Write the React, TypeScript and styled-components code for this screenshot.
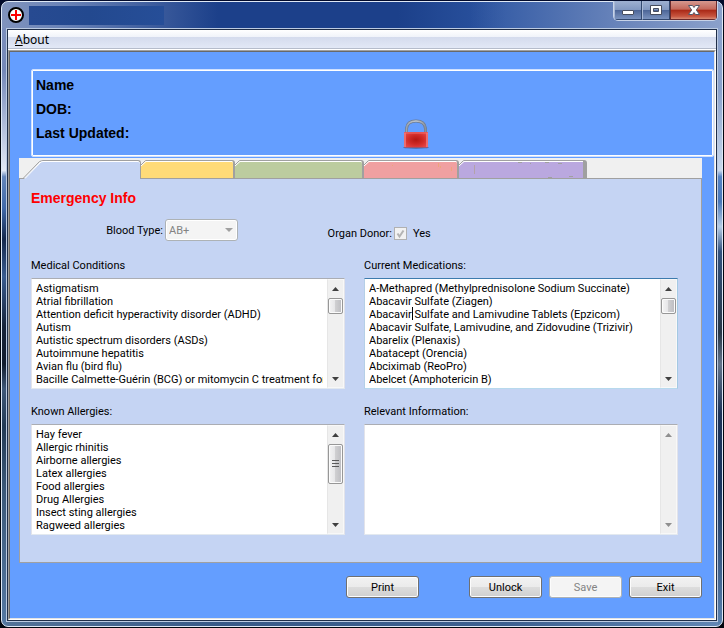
import React from "react";
import styled, { createGlobalStyle, css } from "styled-components";

const uiFont = `Roboto, "DejaVu Sans Condensed", sans-serif`;
const boldFont = `"Liberation Sans", Arial, sans-serif`;

const GlobalStyle = createGlobalStyle`
  *, *::before, *::after { box-sizing: border-box; }
  body { margin: 0; background: #071440; }
  button, input, select, textarea { font: inherit; color: inherit; margin: 0; }
`;

const Desktop = styled.div`
  min-height: 100vh;
  padding: 1px;
  display: flex;
  background: linear-gradient(#020b2c, #02060f 6%, #02060f);
  font: 11px/13px ${uiFont};
  color: #000;
`;

const WindowFrame = styled.div`
  flex: 1;
  min-width: 0;
  display: flex;
  flex-direction: column;
  padding: 0 4px 4px;
  border: 1px solid #dfe9f6;
  border-radius: 7px;
  background:
    linear-gradient(90deg, #8093bd, #6c85b8 8%, rgba(30, 66, 140, 0) 30%, rgba(30, 66, 140, 0) 65%, #6f89bd 88%, #8ba1cb) top / 100% 26px no-repeat,
    linear-gradient(90deg, #1c408a, #1c408a 55%, #2c55a2 70%) top / 100% 26px no-repeat,
    linear-gradient(#7f92bf, #7488b8 11%, #e2e9f5 27%, #6486ba 28%, #4069aa 33%, #14284c 38%, #3a5c90 44%, #16233a 52%, #101b2d 58%, #3f5878 62%, #223a55 68%, #3b5878 78%, #5579a3) left / 4px 100% no-repeat,
    linear-gradient(#8ba1cb, #8aa2cc 14%, #c9d8ec 27%, #5583c4 28%, #4a78b8 32%, #b5cde6 36%, #33527e 40%, #283747 53%, #63748a 58%, #1d3358 66%, #1b3560 78%, #5b82ae) right / 4px 100% no-repeat,
    linear-gradient(90deg, #547398, #385a88 30%, #3d6090 70%, #6287b4);
`;

const TitleBar = styled.header`
  height: 26px;
  display: flex;
  align-items: center;
  justify-content: space-between;
`;

const AppBadge = styled.div`
  display: flex;
  align-items: center;
  gap: 5px;
  padding-left: 2px;
`;

const TitlePlate = styled.div`
  width: 135px;
  height: 19px;
  background: linear-gradient(90deg, #274a91, #23498f 45%, #264e98);
`;

const WindowControls = styled.div`
  align-self: flex-start;
  display: flex;
  height: 20px;
  margin-top: -1px;
  border: 1px solid #c7d3e8;
  border-top: 0;
  border-radius: 0 0 5px 5px;
  overflow: hidden;
`;

const ControlButton = styled.button<{ $close?: boolean }>`
  width: ${(p) => (p.$close ? 47 : 28)}px;
  padding: 0;
  display: grid;
  place-items: center;
  border: 1px solid #32486f;
  border-top: 0;
  border-left-color: #a9b9d6;
  background: linear-gradient(#9eb0d1, #8298c1 48%, #4d6698 52%, #7b93bf);
  ${(p) =>
    p.$close &&
    css`
      border-color: #6b2a2c;
      background: linear-gradient(#d5988f, #c4695c 45%, #ab2a18 52%, #c8553f 85%, #d88b76);
    `}
`;

const ClientEdge = styled.div`
  flex: 1;
  display: flex;
  border: 1px solid #bccbe2;
`;

const Client = styled.div`
  flex: 1;
  min-width: 0;
  display: flex;
  flex-direction: column;
  border: 1px solid #1f2e48;
`;

const MenuBar = styled.nav`
  height: 20px;
  padding-left: 7px;
  display: flex;
  align-items: center;
  border-bottom: 1px solid #fff;
  background: linear-gradient(#fff, #f0f3fa 7px, #d4dbed 7px, #e2e8f6 18px, #b5bccb 18px);
  font: 12px/18px "Noto Sans", sans-serif;
`;

const MenuItem = styled.button`
  padding: 1px 0 0;
  border: 0;
  background: none;
  &::first-letter { text-decoration: underline; }
`;

const Sunken = styled.main`
  flex: 1;
  display: flex;
  flex-direction: column;
  border: 1px solid;
  border-color: #a0a0a0 #fff #fff #a0a0a0;
`;

const Page = styled.div`
  flex: 1;
  padding: 17px 0 20px;
  border: 1px solid;
  border-color: #696969 #e3e3e3 #e3e3e3 #696969;
  background: #649eff;
`;

const PatientBox = styled.section`
  display: flex;
  margin-left: 21px;
  padding: 3px 4px 7px;
  border: 1px solid #cfe0ff;
  border-radius: 2px;
  box-shadow: inset 0 0 0 1px #fff;
`;

const PatientLines = styled.div`
  width: 366px;
  height: 76px;
  font: bold 14px/24px ${boldFont};
`;

const LockSlot = styled.div`
  display: flex;
  align-items: flex-end;
`;

const TabStrip = styled.div`
  display: flex;
  margin: 1px 12px 0 9px;
  padding-top: 2px;
  background: #f0f0f0;
`;

const Tab = styled.button<{ $width: number; $active?: boolean }>`
  flex: 0 1 ${(p) => p.$width}px;
  height: 18px;
  padding: 0;
  display: flex;
  border: 0;
  background: none;
  ${(p) =>
    p.$active &&
    css`
      position: relative;
      height: 19px;
      margin-bottom: -1px;
    `}
`;

const TabCorner = styled.svg`
  display: block;
  flex: none;
`;

const TabBody = styled.span<{ $color: string; $edge: number }>`
  flex: 1;
  align-self: stretch;
  display: flex;
  justify-content: flex-end;
  border-top: 1px solid #a0a0a0;
  border-right: ${(p) => p.$edge}px solid #a0a0a0;
  border-top-right-radius: 3px;
  box-shadow: inset 0 1px 0 #fff;
  background: ${(p) => p.$color};
`;

const Panel = styled.section`
  margin: 0 12px 0 9px;
  padding: 11px 23px 27px 11px;
  border: 1px solid #a0a0a0;
  background: #c5d4f3;
`;

const PanelTitle = styled.h1`
  margin: 0;
  font: bold 14px/16px ${boldFont};
  color: #f00;
`;

const OptionsRow = styled.div`
  display: flex;
  align-items: center;
  margin: 13px 0 16px;
  padding-left: 75px;
`;

const OptionLabel = styled.label<{ $width: number }>`
  width: ${(p) => p.$width}px;
  text-align: right;
  white-space: nowrap;
`;

const BloodSelect = styled.select`
  width: 73px;
  height: 22px;
  margin: 0 82px 0 2px;
  padding: 0 3px;
  appearance: none;
  border: 1px solid #adb2b5;
  border-radius: 3px;
  opacity: 1;
  color: #838383;
  background: #f4f4f4 url("data:image/svg+xml,%3Csvg xmlns='http://www.w3.org/2000/svg' width='8' height='4'%3E%3Cpath d='M0 0h8L4 4z' fill='%23a0a0a0'/%3E%3C/svg%3E") right 4px center no-repeat;
  box-shadow: inset 0 0 0 1px #fff;
`;

const DonorGroup = styled.div`
  display: flex;
  align-items: center;
  padding-top: 6px;
`;

const DonorCheck = styled.input`
  width: 13px;
  height: 13px;
  margin: 0 6px 0 2px;
  appearance: none;
  border: 1px solid #b1b1b1;
  background: #f2f2f2 url("data:image/svg+xml,%3Csvg xmlns='http://www.w3.org/2000/svg' width='11' height='11'%3E%3Cpath d='M2.5 5.5L4.5 8.5L8.5 2.5' fill='none' stroke='%23b4b4b4' stroke-width='2'/%3E%3C/svg%3E") center no-repeat;
`;

const Fields = styled.div`
  display: grid;
  grid-template-columns: 1fr 1fr;
  gap: 14px 19px;
`;

const Field = styled.div`
  display: flex;
  flex-direction: column;
  gap: 4px;
  min-width: 0;
`;

const FieldLabel = styled.label`
  padding-top: 1px;
  line-height: 16px;
`;

const ListFrame = styled.div<{ $focused?: boolean }>`
  display: flex;
  position: relative;
  border: 1px solid;
  border-color: ${(p) => (p.$focused ? "#3d7bad #a4c9e3 #b7d9ed #b5cfe7" : "#abadb3 #e2e3ea #e3e9ef #e2e3ea")};
  background: #fff;
`;

const ListText = styled.textarea`
  flex: 1;
  min-width: 0;
  height: 109px;
  margin: 0 4px;
  padding: 3px 0 2px;
  border: 0;
  outline: 0;
  resize: none;
  overflow: hidden;
  white-space: pre;
  line-height: 13px;
  background: transparent;
`;

const Caret = styled.span`
  position: absolute;
  left: 47px;
  top: 28px;
  width: 1px;
  height: 13px;
  background: #000;
`;

const ScrollBar = styled.div`
  flex: none;
  width: 17px;
  display: flex;
  flex-direction: column;
  border: 1px solid #f8f8f8;
  border-left-color: #e6e6e6;
  background: #f0f0f0;
`;

const ScrollArrow = styled.button<{ $dim?: boolean }>`
  height: 17px;
  padding: 0;
  display: grid;
  place-items: center;
  border: 0;
  background: none;
  color: ${(p) => (p.$dim ? "#8f8f8f" : "#404040")};
`;

const ScrollTrack = styled.div`
  flex: 1;
`;

const Thumb = styled.div<{ $tall?: boolean }>`
  height: ${(p) => (p.$tall ? 40 : 16)}px;
  margin-top: 1px;
  display: grid;
  place-items: center;
  border: 1px solid #979797;
  border-radius: 2px;
  box-shadow: inset 0 0 0 1px #fbfbfb;
  background: linear-gradient(90deg, #f4f4f4, #e6e6e8 45%, #cfcfd1 50%, #bcbcc0);
`;

const Actions = styled.footer`
  display: flex;
  justify-content: flex-end;
  gap: 7px;
  margin: 13px 12px 0;
`;

const ActionButton = styled.button<{ $apart?: boolean }>`
  width: 73px;
  height: 22px;
  padding: 0;
  margin-right: ${(p) => (p.$apart ? 43 : 0)}px;
  border: 1px solid #707070;
  border-radius: 3px;
  box-shadow: inset 0 0 0 1px #fcfcfc;
  background: linear-gradient(#f2f2f2, #ebebeb 50%, #dddddd 50%, #cfcfcf);
  &:disabled {
    color: #838383;
    border-color: #adb2b5;
    background: #f4f4f4;
  }
`;

const AppIcon = () => (
  <svg width="16" height="16" viewBox="0 0 16 16" aria-hidden="true">
    <circle cx="8" cy="8" r="7" fill="#fff" stroke="#000" strokeWidth="2" />
    <path d="M7 3h2v4h4v2H9v4H7V9H3V7h4z" fill="#f00" />
  </svg>
);

const MinimizeIcon = () => (
  <svg width="14" height="12" viewBox="0 0 14 12" aria-hidden="true">
    <rect x="1.5" y="6.5" width="11" height="4" rx="0.5" fill="#fff" stroke="#474d5e" />
  </svg>
);

const MaximizeIcon = () => (
  <svg width="14" height="12" viewBox="0 0 14 12" aria-hidden="true">
    <path d="M1.5 1.5h11v9h-11zM4.5 4.500v3h5v-3z" fill="#fff" fillRule="evenodd" stroke="#474d5e" />
  </svg>
);

const CloseIcon = () => (
  <svg width="14" height="12" viewBox="0 0 14 12" aria-hidden="true">
    <path d="M1.500 1.500h4L7 3.500l1.500-2h4L9.300 6l3.200 4.500h-4L7 8.500l-1.500 2h-4L4.700 6z" fill="#fff" stroke="#535666" />
  </svg>
);

const LockIcon = () => (
  <svg width="28" height="30" viewBox="0 0 28 30" aria-hidden="true">
    <defs>
      <radialGradient id="lockBody" cx="50%" cy="50%" r="60%">
        <stop offset="0" stopColor="#b51712" />
        <stop offset="0.5" stopColor="#cf2a26" />
        <stop offset="1" stopColor="#e8474a" />
      </radialGradient>
      <linearGradient id="lockShackle" x1="0" x2="1">
        <stop offset="0" stopColor="#9aa4b2" />
        <stop offset="0.5" stopColor="#c3c9d0" />
        <stop offset="1" stopColor="#8791a0" />
      </linearGradient>
    </defs>
    <ellipse cx="14" cy="28.500" rx="13" ry="1.200" fill="#36527e" opacity="0.7" />
    <path d="M4.500 14V9.500C5 4.500 8.500 2 14 2s9 2.500 9.500 7.500V14" fill="none" stroke="#6d7b90" strokeWidth="3" />
    <path d="M4.500 14V9.500C5 4.500 8.500 2 14 2s9 2.500 9.500 7.500V14" fill="none" stroke="url(#lockShackle)" strokeWidth="1.600" />
    <rect x="2" y="13" width="24" height="15.500" rx="1" fill="url(#lockBody)" />
    <rect x="2" y="13" width="24" height="2" fill="#ef6a66" opacity="0.5" />
    <path d="M3 14v14M25 14v14" stroke="#f07c7e" strokeWidth="1.500" />
  </svg>
);

const Arrow = ({ down }: { down?: boolean }) => (
  <svg width="7" height="4" viewBox="0 0 7 4" aria-hidden="true">
    <path d={down ? "M0 0h7L3.500 4z" : "M0 4h7L3.500 0z"} fill="currentColor" />
  </svg>
);

const Grip = () => (
  <svg width="7" height="8" viewBox="0 0 7 8" aria-hidden="true">
    <path d="M0 .5h7M0 3.500h7M0 6.500h7" stroke="#5a5a5a" />
  </svg>
);

const PurpleMarks = () => (
  <svg width="118" height="17" viewBox="0 0 118 17" aria-hidden="true">
    <path d="M9.500 4v9" stroke="#b3a3a8" />
    <path d="M53 1.500h4M65 2.500h1M80 1.500h4M93 2.500h4M83 16.500h4M104 15.500h4" stroke="#a0a0a0" />
  </svg>
);

const PinkMarks = () => (
  <svg width="70" height="17" viewBox="0 0 70 17" aria-hidden="true">
    <path d="M5 4.500h1M51.500 2v4M53.500 5v2M64.500 6v4" stroke="#eda57c" />
  </svg>
);

interface TabInfo {
  name: string;
  color: string;
  width: number;
  edge: number;
  active?: boolean;
  marks?: React.ReactNode;
}

const tabs: TabInfo[] = [
  { name: "Emergency", color: "#c5d4f3", width: 122, edge: 1, active: true },
  { name: "Second", color: "#ffdb78", width: 94, edge: 2 },
  { name: "Third", color: "#bccc9f", width: 129, edge: 2 },
  { name: "Fourth", color: "#f0a0a1", width: 95, edge: 2, marks: <PinkMarks /> },
  { name: "Fifth", color: "#baa8df", width: 128, edge: 4, marks: <PurpleMarks /> },
];

const conditions = [
  "Astigmatism",
  "Atrial fibrillation",
  "Attention deficit hyperactivity disorder (ADHD)",
  "Autism",
  "Autistic spectrum disorders (ASDs)",
  "Autoimmune hepatitis",
  "Avian flu (bird flu)",
  "Bacille Calmette-Guérin (BCG) or mitomycin C treatment for b",
];

const medications = [
  "A-Methapred (Methylprednisolone Sodium Succinate)",
  "Abacavir Sulfate (Ziagen)",
  "Abacavir Sulfate and Lamivudine Tablets (Epzicom)",
  "Abacavir Sulfate, Lamivudine, and Zidovudine (Trizivir)",
  "Abarelix (Plenaxis)",
  "Abatacept (Orencia)",
  "Abciximab (ReoPro)",
  "Abelcet (Amphotericin B)",
];

const allergies = [
  "Hay fever",
  "Allergic rhinitis",
  "Airborne allergies",
  "Latex allergies",
  "Food allergies",
  "Drug Allergies",
  "Insect sting allergies",
  "Ragweed allergies",
];

interface ListFieldProps {
  id: string;
  label: string;
  lines: string[];
  thumb?: "short" | "tall";
  focused?: boolean;
}

function ListField({ id, label, lines, thumb, focused }: ListFieldProps) {
  return (
    <Field>
      <FieldLabel htmlFor={id}>{label}</FieldLabel>
      <ListFrame $focused={focused}>
        <ListText id={id} readOnly wrap="off" value={lines.join("\n")} />
        {focused && <Caret />}
        <ScrollBar>
          <ScrollArrow type="button" aria-label="Scroll up" $dim={!thumb}>
            <Arrow />
          </ScrollArrow>
          <ScrollTrack>
            {thumb && <Thumb $tall={thumb === "tall"}>{thumb === "tall" && <Grip />}</Thumb>}
          </ScrollTrack>
          <ScrollArrow type="button" aria-label="Scroll down" $dim={!thumb}>
            <Arrow down />
          </ScrollArrow>
        </ScrollBar>
      </ListFrame>
    </Field>
  );
}

export default function App() {
  return (
    <>
      <GlobalStyle />
      <Desktop>
        <WindowFrame>
          <TitleBar>
            <AppBadge>
              <AppIcon />
              <TitlePlate />
            </AppBadge>
            <WindowControls>
              <ControlButton aria-label="Minimize"><MinimizeIcon /></ControlButton>
              <ControlButton aria-label="Maximize"><MaximizeIcon /></ControlButton>
              <ControlButton aria-label="Close" $close><CloseIcon /></ControlButton>
            </WindowControls>
          </TitleBar>
          <ClientEdge>
            <Client>
              <MenuBar>
                <MenuItem type="button">About</MenuItem>
              </MenuBar>
              <Sunken>
                <Page>
                  <PatientBox>
                    <PatientLines>
                      <div>Name</div>
                      <div>DOB:</div>
                      <div>Last Updated:</div>
                    </PatientLines>
                    <LockSlot>
                      <LockIcon />
                    </LockSlot>
                  </PatientBox>
                  <TabStrip role="tablist">
                    {tabs.map((tab) => (
                      <Tab
                        key={tab.name}
                        type="button"
                        role="tab"
                        aria-label={tab.name}
                        aria-selected={!!tab.active}
                        $width={tab.width}
                        $active={tab.active}
                      >
                        {tab.active ? (
                          <TabCorner width="24" height="19" viewBox="0 0 24 19">
                            <path d="M5 19L22 1.500L24 1V19z" fill={tab.color} />
                            <path d="M0 18.500H4L20.500 1.500L24 .5" fill="none" stroke="#a0a0a0" />
                            <path d="M6 18.500L22 2L24 1.500" fill="none" stroke="#fff" />
                          </TabCorner>
                        ) : (
                          <TabCorner width="6" height="18" viewBox="0 0 6 18">
                            <path d="M0 6L5 1H6V18H0z" fill={tab.color} />
                            <path d="M0 6L5 1.500H6" fill="none" stroke="#fff" />
                            <path d="M0 5L4.500 .5H6" fill="none" stroke="#a0a0a0" />
                          </TabCorner>
                        )}
                        <TabBody $color={tab.color} $edge={tab.edge}>{tab.marks}</TabBody>
                      </Tab>
                    ))}
                  </TabStrip>
                  <Panel>
                    <PanelTitle>Emergency Info</PanelTitle>
                    <OptionsRow>
                      <OptionLabel htmlFor="blood" $width={57}>Blood Type:</OptionLabel>
                      <BloodSelect id="blood" disabled defaultValue="AB+">
                        <option>AB+</option>
                      </BloodSelect>
                      <DonorGroup>
                        <OptionLabel as="span" id="donor-label" $width={72}>Organ Donor:</OptionLabel>
                        <DonorCheck id="donor" type="checkbox" checked disabled readOnly aria-describedby="donor-label" />
                        <label htmlFor="donor">Yes</label>
                      </DonorGroup>
                    </OptionsRow>
                    <Fields>
                      <ListField id="conditions" label="Medical Conditions" lines={conditions} thumb="short" />
                      <ListField id="medications" label="Current Medications:" lines={medications} thumb="short" focused />
                      <ListField id="allergies" label="Known Allergies:" lines={allergies} thumb="tall" />
                      <ListField id="relevant" label="Relevant Information:" lines={[]} />
                    </Fields>
                  </Panel>
                  <Actions>
                    <ActionButton type="button" $apart>Print</ActionButton>
                    <ActionButton type="button">Unlock</ActionButton>
                    <ActionButton type="button" disabled>Save</ActionButton>
                    <ActionButton type="button">Exit</ActionButton>
                  </Actions>
                </Page>
              </Sunken>
            </Client>
          </ClientEdge>
        </WindowFrame>
      </Desktop>
    </>
  );
}
